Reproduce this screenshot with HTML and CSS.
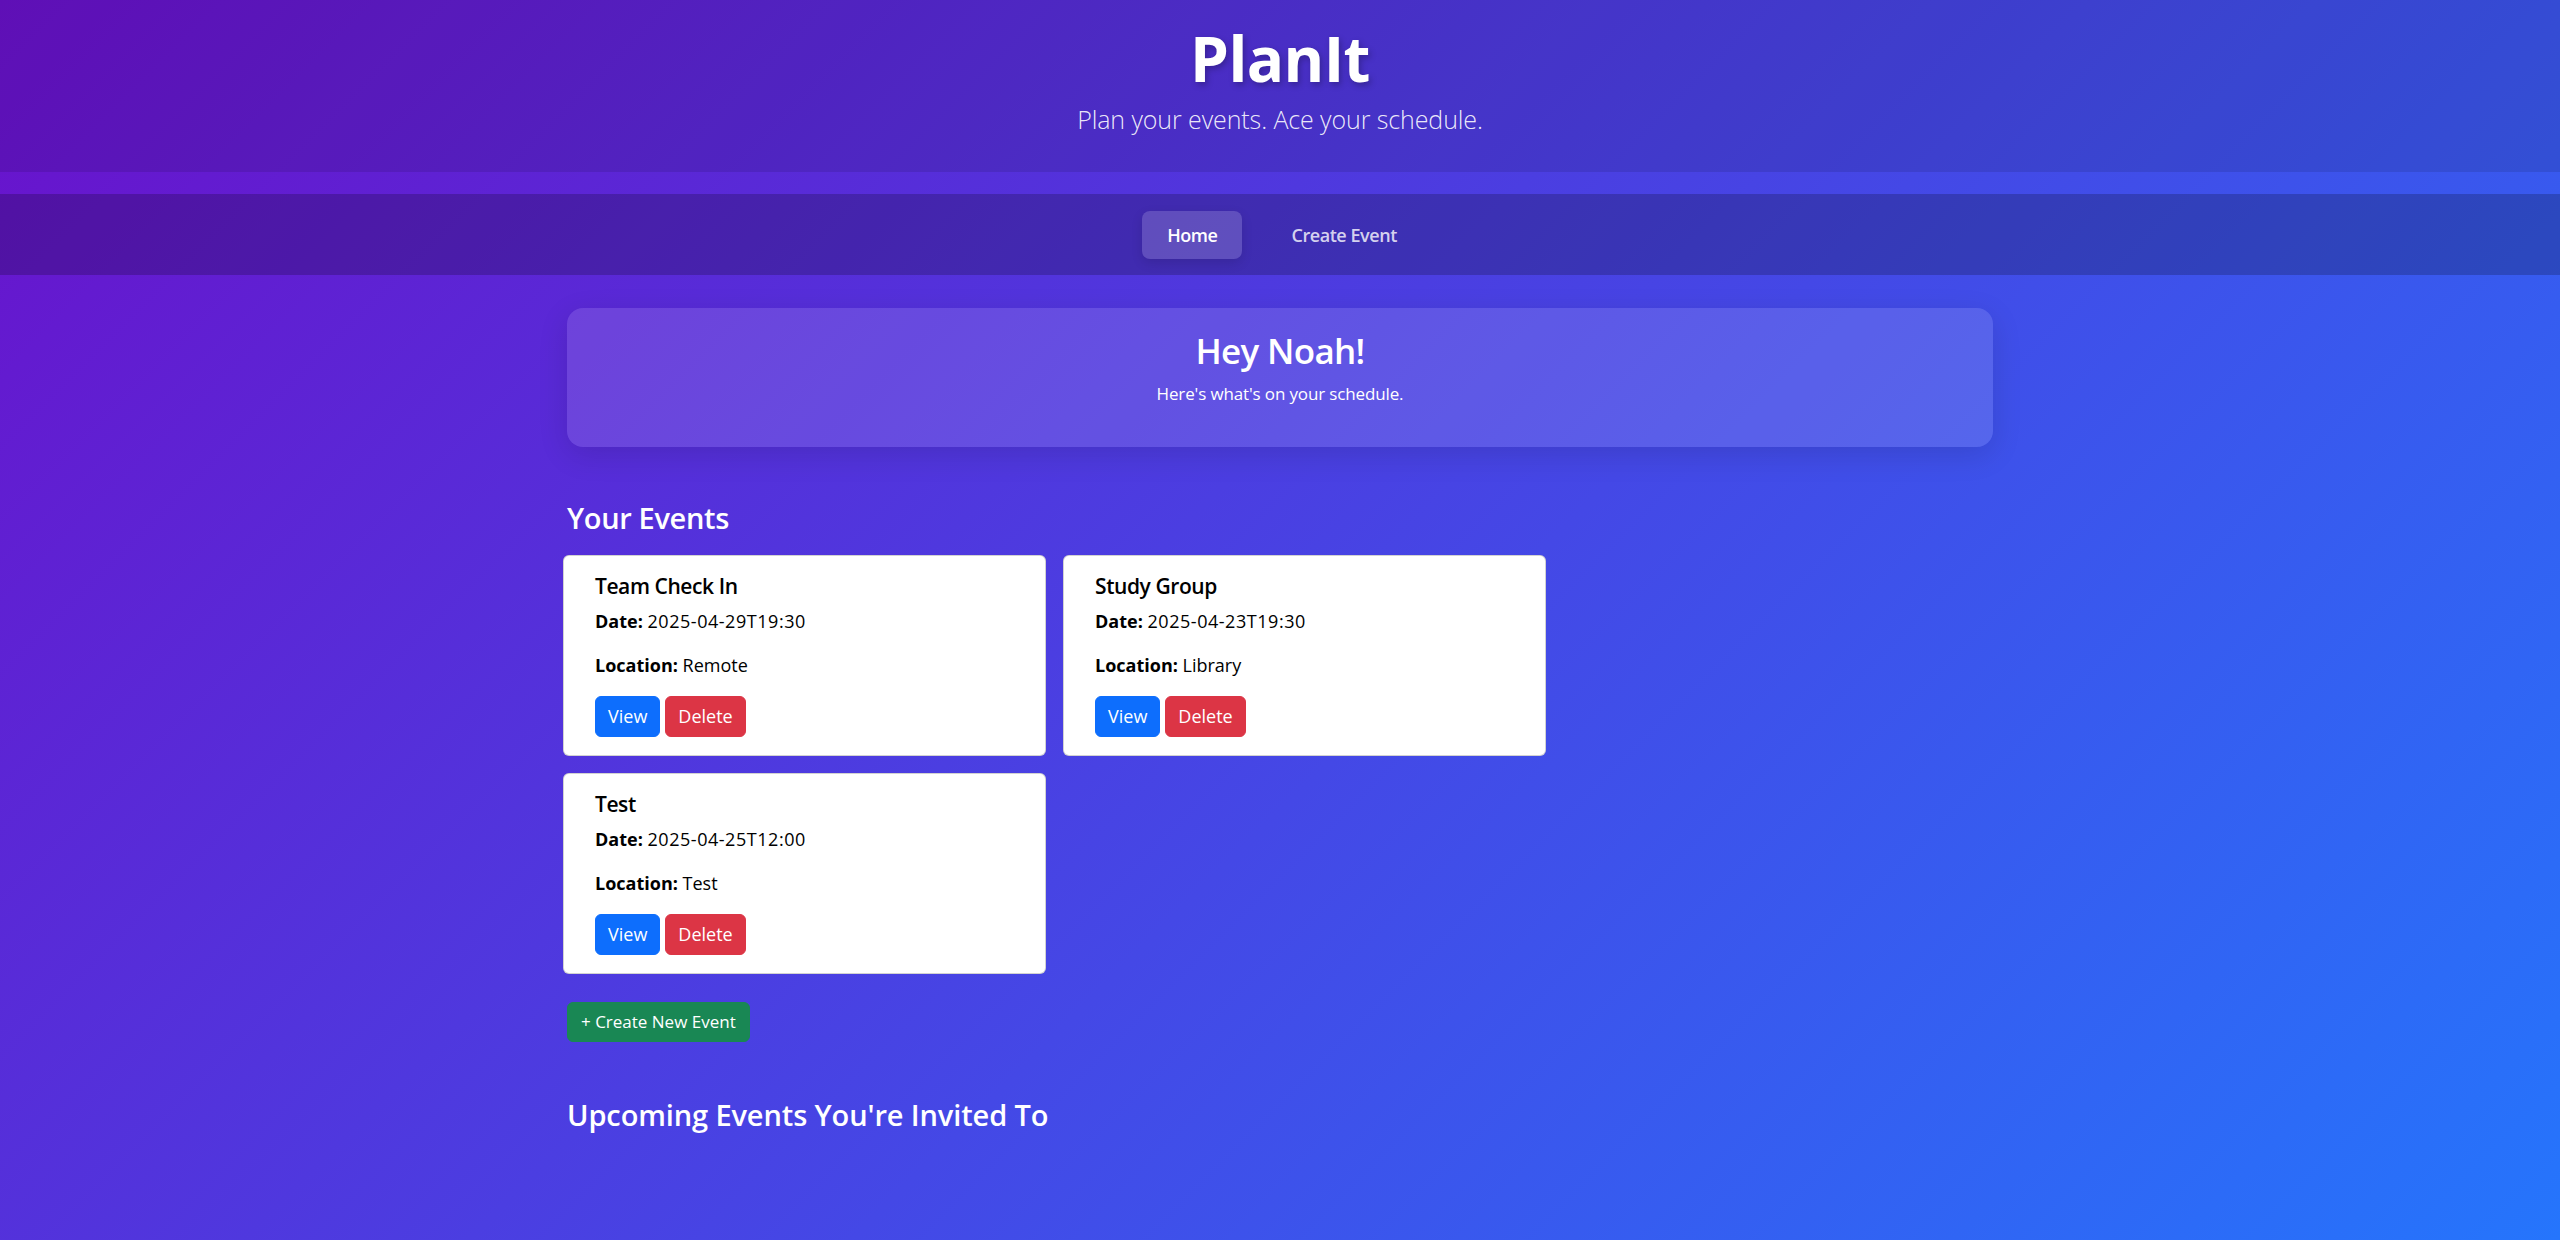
FILE: index.html
```html
<!DOCTYPE html>
<html lang="en">
<head>
<meta charset="utf-8">
<title>PlanIt</title>
<link rel="stylesheet" href="styles.css">
</head>
<body>
<header class="site-header">
  <h1 class="brand">PlanIt</h1>
  <p class="tagline">Plan your events. Ace your schedule.</p>
</header>
<nav class="main-nav">
  <a class="nav-link active" href="#">Home</a>
  <a class="nav-link" href="#">Create Event</a>
</nav>
<main class="container">
  <section class="welcome">
    <h2 class="welcome-title">Hey Noah!</h2>
    <p class="welcome-text">Here's what's on your schedule.</p>
  </section>

  <h3 class="section-title">Your Events</h3>
  <div class="event-grid">
    <div class="event-card">
      <h5 class="event-title">Team Check In</h5>
      <p class="event-meta"><strong>Date:</strong> <span class="event-date">2025-04-29T19:30</span></p>
      <p class="event-meta"><strong>Location:</strong> Remote</p>
      <div class="event-actions">
        <a class="btn btn-primary" href="#">View</a>
        <a class="btn btn-danger" href="#">Delete</a>
      </div>
    </div>
    <div class="event-card">
      <h5 class="event-title">Study Group</h5>
      <p class="event-meta"><strong>Date:</strong> <span class="event-date">2025-04-23T19:30</span></p>
      <p class="event-meta"><strong>Location:</strong> Library</p>
      <div class="event-actions">
        <a class="btn btn-primary" href="#">View</a>
        <a class="btn btn-danger" href="#">Delete</a>
      </div>
    </div>
    <div class="event-card">
      <h5 class="event-title">Test</h5>
      <p class="event-meta"><strong>Date:</strong> <span class="event-date">2025-04-25T12:00</span></p>
      <p class="event-meta"><strong>Location:</strong> Test</p>
      <div class="event-actions">
        <a class="btn btn-primary" href="#">View</a>
        <a class="btn btn-danger" href="#">Delete</a>
      </div>
    </div>
  </div>

  <a class="btn btn-success btn-create" href="#">+ Create New Event</a>

  <h3 class="section-title section-title-invited">Upcoming Events You're Invited To</h3>
</main>
</body>
</html>
```
FILE: styles.css
```css
* {
  box-sizing: border-box;
}

html, body {
  margin: 0;
  padding: 0;
}

body {
  min-height: 100vh;
  font-family: "Open Sans", "Noto Sans", sans-serif;
  font-size: 18px;
  line-height: 1.5;
  color: #000;
  background: linear-gradient(135deg, #6a11cb 0%, #2575fc 100%);
}

a {
  text-decoration: none;
}

/* Header */
.site-header {
  text-align: center;
  color: #fff;
  padding: 20px 0 34px;
  margin-bottom: 22px;
  background: rgba(0, 0, 0, 0.1);
}

.brand {
  margin: 0;
  font-size: 62px;
  font-weight: 700;
  line-height: 76px;
  letter-spacing: -0.01em;
  text-shadow: 2px 3px 6px rgba(0, 0, 0, 0.25);
}

.tagline {
  margin: 4px 0 0;
  font-size: 25px;
  font-weight: 300;
  line-height: 38px;
  color: rgba(255, 255, 255, 0.9);
  letter-spacing: -0.004em;
}

/* Navigation */
.main-nav {
  display: flex;
  justify-content: center;
  gap: 24px;
  padding: 17px 0 16px 4px;
  background: rgba(0, 0, 0, 0.2);
}

.nav-link {
  display: block;
  padding: 12px 25px;
  font-size: 18px;
  font-weight: 600;
  line-height: 24px;
  color: rgba(255, 255, 255, 0.8);
  border-radius: 8px;
  letter-spacing: -0.025em;
}

.nav-link.active {
  color: #fff;
  background: rgba(255, 255, 255, 0.17);
  box-shadow: 0 4px 12px rgba(0, 0, 0, 0.12);
}

/* Main */
.container {
  max-width: 1426px;
  margin: 33px auto 0;
  color: #fff;
}

.welcome {
  text-align: center;
  padding: 21px 24px 24px;
  margin-bottom: 53px;
  border-radius: 16px;
  background: rgba(255, 255, 255, 0.12);
  box-shadow: 0 8px 30px rgba(0, 0, 0, 0.12);
}

.welcome-title {
  margin: 0 0 8px;
  font-size: 35px;
  font-weight: 600;
  line-height: 43px;
  letter-spacing: -0.02em;
}

.welcome-text {
  margin: 0 0 16px;
  font-size: 17px;
  line-height: 27px;
  letter-spacing: -0.008em;
}

.section-title {
  margin: 0 0 20px;
  font-size: 29px;
  font-weight: 600;
  line-height: 35px;
  letter-spacing: -0.012em;
}

.section-title-invited {
  margin-top: 55px;
  letter-spacing: -0.004em;
}

/* Event cards */
.event-grid {
  display: flex;
  flex-wrap: wrap;
  gap: 17px;
  margin: 1px -4px 28px;
}

.event-card {
  width: 483px;
  padding: 17px 31px 18px;
  color: #000;
  background: #fff;
  border: 1px solid rgba(0, 0, 0, 0.175);
  border-radius: 6px;
}

.event-title {
  margin: 0 0 9px;
  font-size: 21px;
  font-weight: 600;
  line-height: 26px;
  letter-spacing: -0.02em;
}

.event-meta {
  margin: 0 0 17px;
  font-size: 18px;
  line-height: 27px;
}

.event-meta strong {
  font-weight: 700;
}

.event-date {
  letter-spacing: 0.03em;
}

.event-actions {
  display: flex;
  gap: 5px;
}

/* Buttons */
.btn {
  display: inline-block;
  padding: 6px 12px;
  font-size: 18px;
  line-height: 27px;
  color: #fff;
  border: 1px solid transparent;
  border-radius: 6px;
}

.btn-primary {
  background: #0d6efd;
  border-color: #0d6efd;
}

.btn-danger {
  background: #dc3545;
  border-color: #dc3545;
}

.btn-success {
  background: #198754;
  border-color: #198754;
}

.btn-create {
  padding: 6px 13px;
  font-size: 17px;
  line-height: 26px;
}
```
